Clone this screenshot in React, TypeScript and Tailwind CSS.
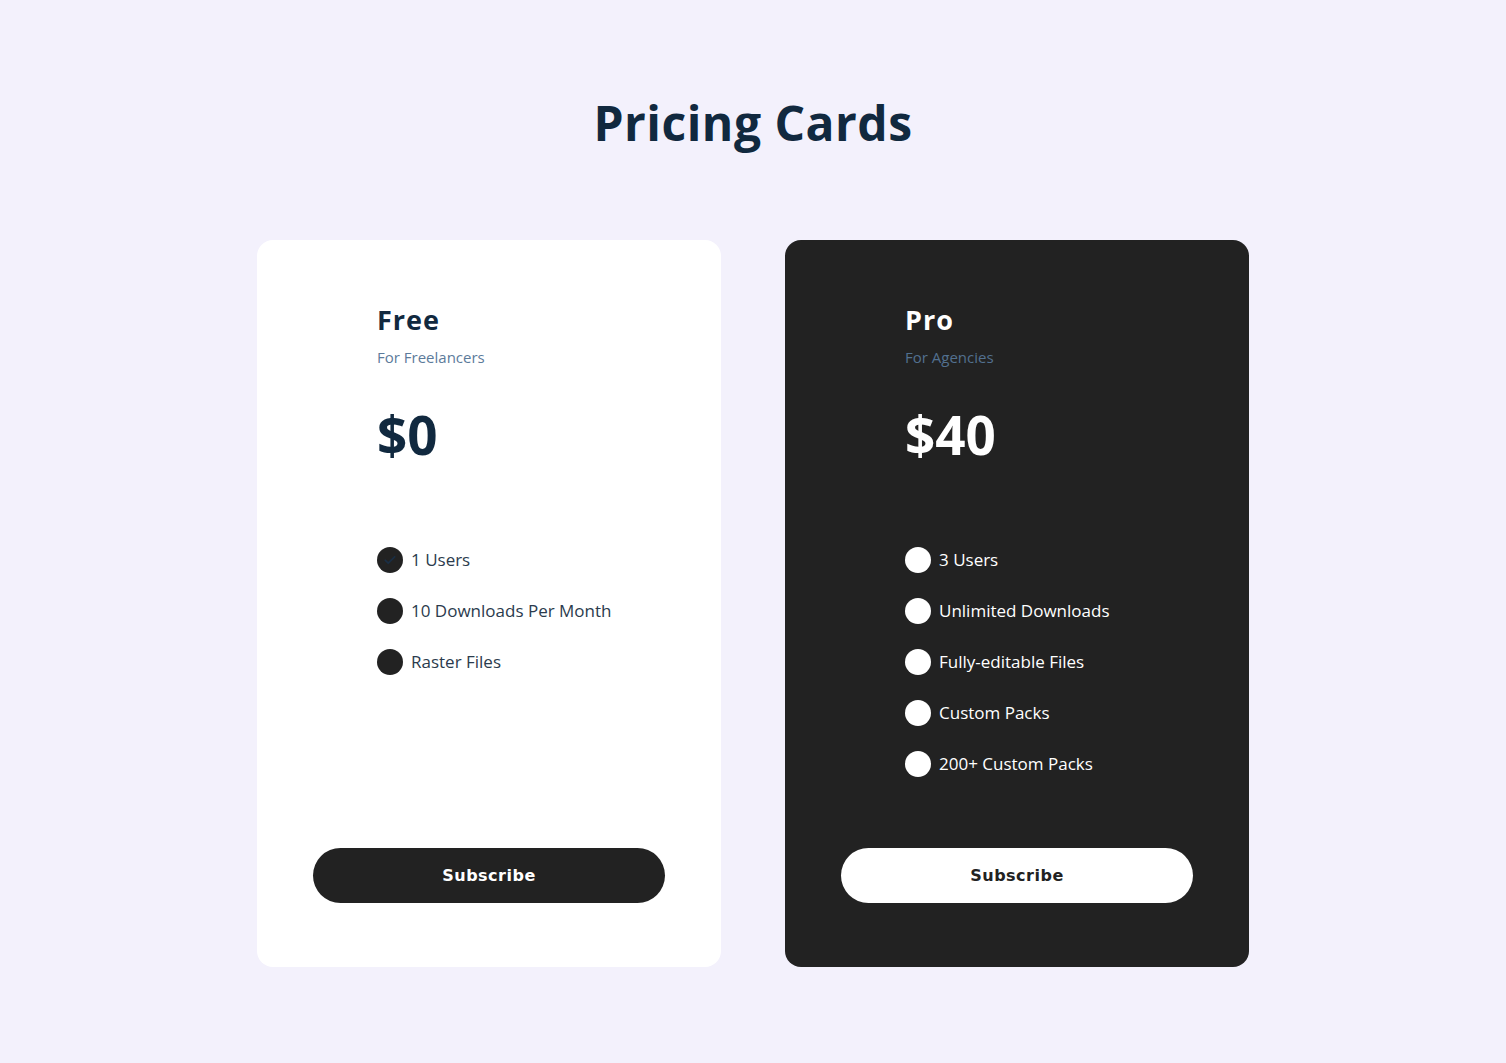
const plans = [
  {
    name: "Free",
    audience: "For Freelancers",
    price: "$0",
    features: ["1 Users", "10 Downloads Per Month", "Raster Files"],
    dark: false,
  },
  {
    name: "Pro",
    audience: "For Agencies",
    price: "$40",
    features: ["3 Users", "Unlimited Downloads", "Fully-editable Files", "Custom Packs", "200+ Custom Packs"],
    dark: true,
  },
];

function Dot({ dark, check }: { dark: boolean; check: boolean }) {
  return (
    <span
      className={
        "flex h-[26px] w-[26px] shrink-0 items-center justify-center rounded-full " +
        (dark ? "bg-white" : "bg-[#222222]")
      }
    >
      {check && (
        <svg width="14" height="14" viewBox="0 0 24 24" fill="none">
          <path d="M4 12.5l5 5L20 6.5" stroke="#1a2e44" strokeWidth="3" strokeLinecap="round" strokeLinejoin="round" />
        </svg>
      )}
    </span>
  );
}

export default function App() {
  return (
    <div
      className="min-h-[1063px] bg-[#f3f1fc] pt-[92px]"
      style={{ fontFamily: '"Open Sans", "Noto Sans", sans-serif' }}
    >
      <h1 className="text-center text-[48px] font-bold leading-[62px] tracking-[0.5px] text-[#11293f]">Pricing Cards</h1>

      <div className="mt-[86px] flex justify-center gap-[64px]">
        {plans.map((p, i) => (
          <div
            key={p.name}
            className={
              "flex h-[727px] w-[464px] flex-col rounded-[16px] pb-[64px] pt-[62px] " +
              (p.dark ? "bg-[#222222] text-white" : "bg-white text-[#11293f]")
            }
          >
            <div className="pl-[120px] pr-[40px]">
              <h2 className="text-[27px] font-bold leading-[36px] tracking-[1px]">{p.name}</h2>
              <p className={"mt-[8px] text-[15px] leading-[22px] " + (p.dark ? "text-[#52708f]" : "text-[#5c7b9b]")}>
                {p.audience}
              </p>
              <div className="mt-[37px] text-[53px] font-bold leading-[60px]">{p.price}</div>
              <ul className="mt-[82px] flex flex-col gap-[25px]">
                {p.features.map((f, j) => (
                  <li key={f} className="flex items-center gap-[8px]">
                    <Dot dark={p.dark} check={i === 0 && j === 0} />
                    <span
                      className={
                        "whitespace-nowrap text-[17px] leading-[26px] " + (p.dark ? "text-white" : "text-[#2b3b4d]")
                      }
                    >
                      {f}
                    </span>
                  </li>
                ))}
              </ul>
            </div>
            <div className="mt-auto px-[56px]">
              <button
                className={
                  "h-[55px] w-full rounded-full text-[16px] font-bold tracking-[0.5px] " +
                  (p.dark ? "bg-white text-[#222222]" : "bg-[#222222] text-white")
                }
                style={{ fontFamily: '"DejaVu Sans", Verdana, sans-serif' }}
              >
                Subscribe
              </button>
            </div>
          </div>
        ))}
      </div>
    </div>
  );
}
